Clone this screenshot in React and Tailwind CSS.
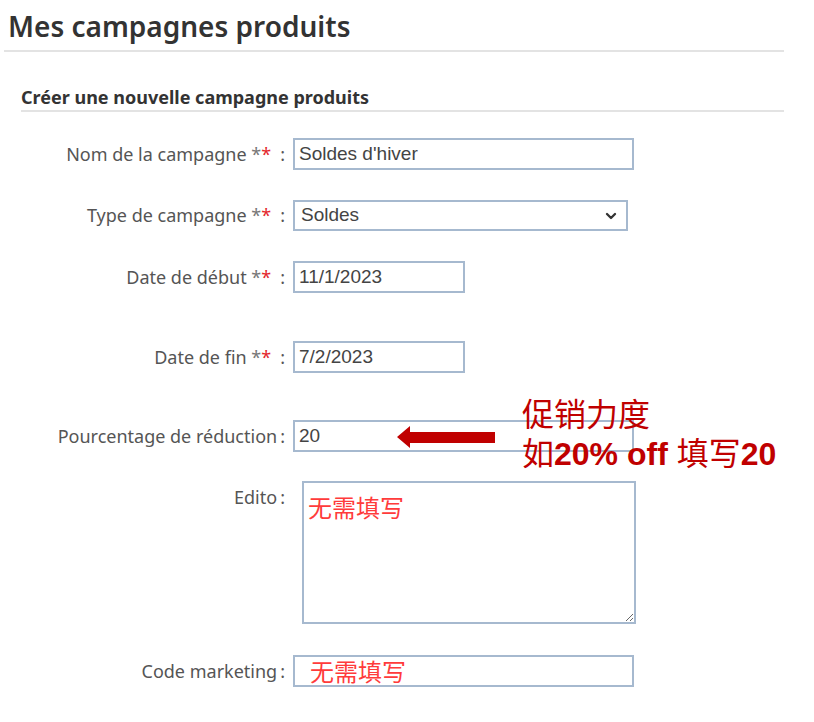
import { ChevronDown } from 'lucide-react'

const labelFont = { fontFamily: '"Noto Sans", "Open Sans", sans-serif' }

function Stars() {
  return (
    <span>
      <span className="text-[#777]">*</span>
      <span className="text-[#e3262c]">*</span>
    </span>
  )
}

function Label({ children, required, top }) {
  return (
    <div
      className={`w-[286px] shrink-0 pr-[1px] text-right text-[18px] text-[#555] ${top ? 'pt-[3px]' : 'self-center'}`}
      style={labelFont}
    >
      {children}
      {required && (
        <>
          {' '}
          <Stars />
        </>
      )}
      <span className={required ? 'ml-[9px]' : 'ml-[3px]'}>:</span>
    </div>
  )
}

function TextInput({ value, width, red }) {
  return (
    <input
      type="text"
      readOnly
      value={value}
      className={`h-[32px] ${width} border-2 border-[#a6b9cf] bg-white px-[4px] outline-none ${
        red ? 'pl-[15px] text-[24px] text-[#ff3b3b]' : 'text-[19px] text-[#444]'
      }`}
      style={{ fontFamily: red ? '"Noto Sans CJK SC", sans-serif' : '"Liberation Sans", Arial, sans-serif' }}
    />
  )
}

export default function App() {
  return (
    <div className="min-h-[722px] w-[814px] bg-white" style={labelFont}>
      {/* Page title */}
      <div className="pl-[4px] pr-[30px] pt-[8px]">
        <h1 className="border-b-2 border-[#e3e3e3] pb-[6px] pl-[4px] text-[28px] font-semibold leading-[36px] text-[#333]">
          Mes campagnes produits
        </h1>
      </div>

      {/* Section */}
      <div className="pl-[21px] pr-[30px] pt-[33px]">
        <h2 className="border-b-2 border-[#e3e3e3] pb-[1px] text-[18px] font-bold leading-[24px] text-[#333]">
          Créer une nouvelle campagne produits
        </h2>
      </div>

      <div className="flex flex-col pt-[26px]">
        <div className="flex items-center gap-[7px]">
          <Label required>Nom de la campagne</Label>
          <TextInput value="Soldes d'hiver" width="w-[341px]" />
        </div>

        <div className="mt-[30px] flex items-center gap-[7px]">
          <Label required>Type de campagne</Label>
          <div className="relative flex h-[31px] w-[335px] items-center border-2 border-[#a6b9cf] bg-white pl-[6px]">
            <span className="text-[19px] text-[#444]" style={{ fontFamily: '"Liberation Sans", Arial, sans-serif' }}>
              Soldes
            </span>
            <ChevronDown className="absolute right-[7px] top-1/2 h-[16px] w-[16px] -translate-y-1/2 text-[#333]" strokeWidth={3.5} />
          </div>
        </div>

        <div className="mt-[30px] flex items-center gap-[7px]">
          <Label required>Date de début</Label>
          <TextInput value="11/1/2023" width="w-[172px]" />
        </div>

        <div className="mt-[48px] flex items-center gap-[7px]">
          <Label required>Date de fin</Label>
          <TextInput value="7/2/2023" width="w-[172px]" />
        </div>

        <div className="mt-[47px] flex items-center gap-[7px]">
          <Label>Pourcentage de réduction</Label>
          <div className="relative">
            <TextInput value="20" width="w-[341px]" />
            {/* annotation arrow + note */}
            <svg className="absolute left-[104px] top-[4px]" width="100" height="26" viewBox="0 0 100 26">
              <polygon points="0,13 13,2 13,8 98,8 98,19 13,19 13,24" fill="#c00000" />
            </svg>
            <div
              className="absolute left-[229px] top-[-24px] whitespace-nowrap text-[#c00000]"
              style={{ fontFamily: '"Liberation Sans", Arial, "Noto Sans CJK SC", sans-serif' }}
            >
              <div className="text-[32px] leading-[39px]">促销力度</div>
              <div className="text-[32px] leading-[39px]">
                如<span className="font-bold">20% off </span>填写<span className="font-bold">20</span>
              </div>
            </div>
          </div>
        </div>

        <div className="mt-[29px] flex items-start gap-[16px]">
          <Label top>Edito</Label>
          <textarea
            readOnly
            value="无需填写"
            className="h-[143px] w-[334px] resize border-2 border-[#a6b9cf] bg-white px-[4px] pt-[9px] text-[24px] leading-[30px] text-[#ff3b3b] outline-none"
            style={{ fontFamily: '"Noto Sans CJK SC", sans-serif' }}
          />
        </div>

        <div className="mt-[31px] flex items-center gap-[7px]">
          <Label>Code marketing</Label>
          <TextInput value="无需填写" width="w-[341px]" red />
        </div>
      </div>
    </div>
  )
}
